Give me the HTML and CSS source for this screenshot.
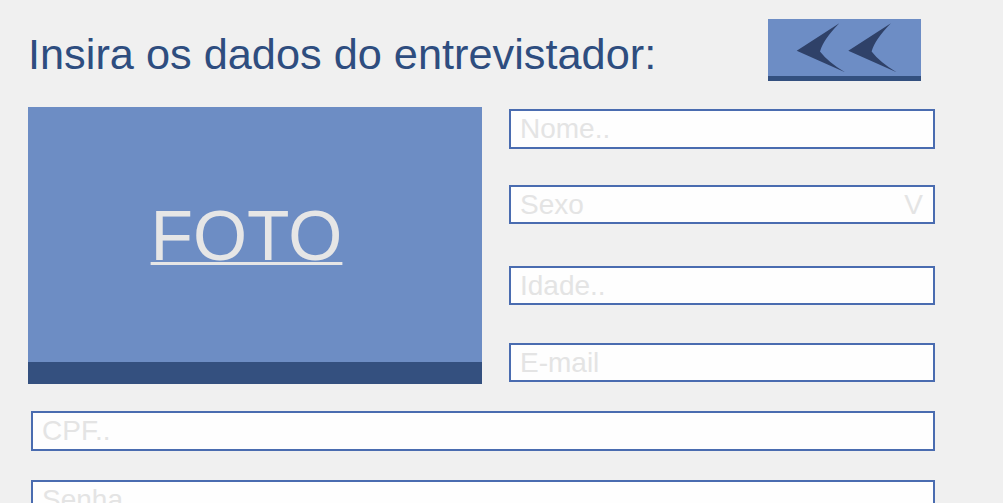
FILE: index.html
```html
<!DOCTYPE html>
<html lang="pt">
<head>
<meta charset="utf-8">
<title>Entrevistador</title>
<link rel="stylesheet" href="styles.css">
</head>
<body>
<div class="page">
  <header class="header">
    <h1 class="title">Insira os dados do entrevistador:</h1>
    <div class="back">
      <svg width="153" height="57" viewBox="0 0 153 57" aria-hidden="true">
        <path d="M28.7 31.7 L71.3 4.3 Q55 21 52 32.5 Q60 43 77 53.3 Z" fill="#2f4168"/>
        <path d="M80.3 31.7 L122.9 4.3 Q106.6 21 103.6 32.5 Q111.6 43 128.6 53.3 Z" fill="#2f4168"/>
      </svg>
    </div>
  </header>
  <div class="main">
    <div class="photo"><span class="photo-label">FOTO</span></div>
    <div class="fields">
      <div class="field"><span>Nome..</span></div>
      <div class="field f-sexo"><span>Sexo</span><span>V</span></div>
      <div class="field f-idade"><span>Idade..</span></div>
      <div class="field f-email"><span>E-mail</span></div>
    </div>
  </div>
  <div class="field wide f-cpf"><span>CPF..</span></div>
  <div class="field wide f-senha"><span>Senha</span></div>
</div>
</body>
</html>
```

FILE: styles.css
```css
* { box-sizing: border-box; }

html, body {
  margin: 0;
  height: 100%;
  overflow: hidden;
}

body {
  background: #f0f0f0;
  font-family: "Liberation Sans", Arial, sans-serif;
}

.page {
  padding-top: 19px;
}

.header {
  display: flex;
  height: 62px;
  padding-left: 28px;
}

.title {
  margin: 10px 0 0;
  font-size: 43.3px;
  line-height: 50px;
  font-weight: normal;
  color: #2e4d7f;
}

.back {
  margin-left: auto;
  margin-right: 82px;
  width: 153px;
  height: 62px;
  background: #6d8dc5;
  border-bottom: 5px solid #33507f;
}

.back svg { display: block; }

.main {
  display: flex;
  gap: 27px;
  margin-top: 26px;
  padding-left: 28px;
}

.photo {
  width: 454px;
  height: 277px;
  background: #6d8dc4;
  border-bottom: 22px solid #34507f;
  display: flex;
  align-items: center;
  justify-content: center;
  padding: 5px 17px 0 0;
}

.photo-label {
  font-size: 69.5px;
  line-height: 1;
  color: #e6e6e6;
  text-decoration: underline;
  text-decoration-thickness: 3px;
}

.fields {
  width: 426px;
  display: flex;
  flex-direction: column;
  padding-top: 2px;
}

.field {
  height: 40px;
  border: 2px solid #4a6cb0;
  background: #fefefe;
  display: flex;
  align-items: center;
  justify-content: space-between;
  padding: 0 10px 0 9px;
  font-size: 28px;
  line-height: 36px;
  color: #e4e4e4;
}

.f-sexo { margin-top: 36px; height: 39px; }
.f-idade { margin-top: 42px; height: 39px; }
.f-email { margin-top: 38px; height: 39px; }

.wide {
  width: 904px;
  margin-left: 31px;
}

.f-cpf { margin-top: 27px; }
.f-senha { margin-top: 29px; }
```
